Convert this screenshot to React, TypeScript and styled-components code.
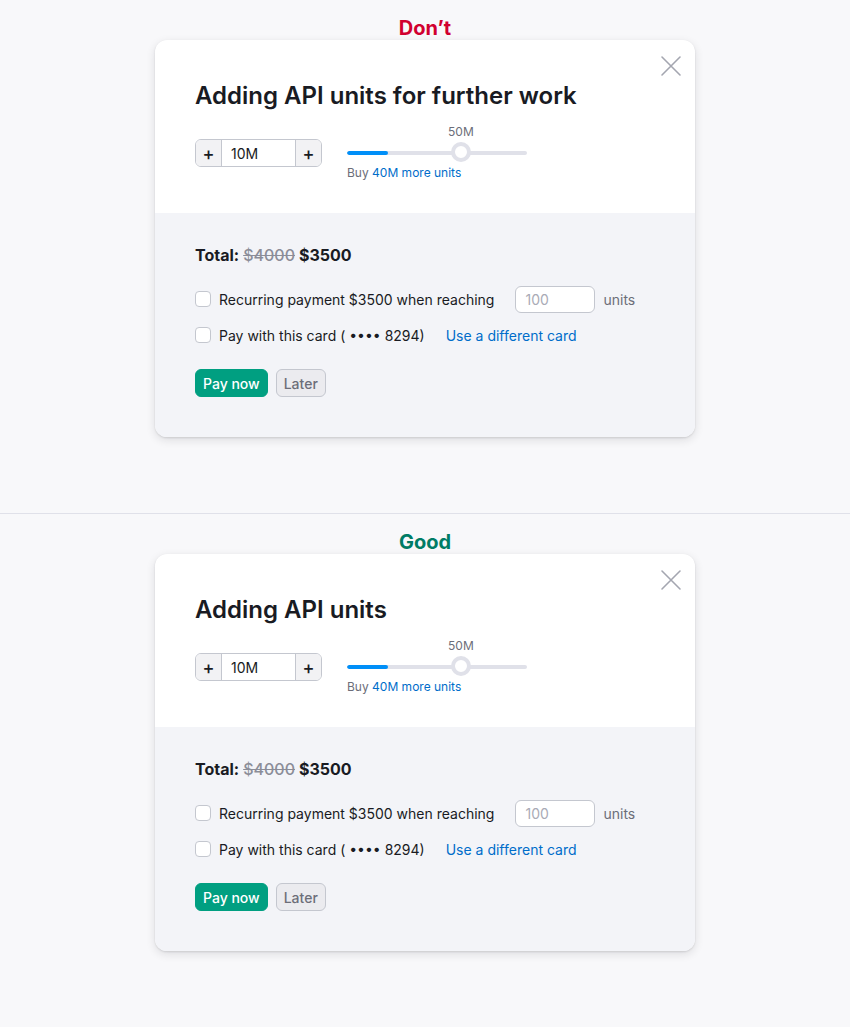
import React from "react";
import styled, { createGlobalStyle } from "styled-components";

const GlobalStyle = createGlobalStyle`
  html, body { margin: 0; padding: 0; background: #f8f8fa; }
  body { font-family: Inter, "Noto Sans", Arial, sans-serif; color: #191b23; -webkit-font-smoothing: antialiased; }
  * { box-sizing: border-box; }
`;

const Page = styled.div`
  width: 850px;
  display: flex;
  flex-direction: column;
`;

const Section = styled.section<{ $last?: boolean }>`
  display: flex;
  flex-direction: column;
  align-items: center;
  padding: 16px 0 76px;
  border-bottom: ${(p) => (p.$last ? "none" : "1px solid #e0e1e9")};
`;

const Verdict = styled.div<{ $tone: "bad" | "good" }>`
  font-size: 20px;
  line-height: 24px;
  font-weight: 700;
  color: ${(p) => (p.$tone === "bad" ? "#d1002f" : "#007c65")};
`;

const Card = styled.div`
  position: relative;
  width: 540px;
  border-radius: 12px;
  overflow: hidden;
  background: #ffffff;
  box-shadow: 0 1px 2px rgba(25, 27, 35, 0.12), 0 3px 10px rgba(25, 27, 35, 0.12);
`;

const CloseButton = styled.button`
  position: absolute;
  top: 14px;
  right: 12px;
  width: 24px;
  height: 24px;
  padding: 0;
  border: none;
  background: transparent;
  display: flex;
  align-items: center;
  justify-content: center;
  color: #a4a6b0;
  cursor: pointer;
`;

const Header = styled.div`
  padding: 42px 40px 32px;
  display: flex;
  flex-direction: column;
  gap: 14px;
`;

const Title = styled.h2`
  margin: 0;
  font-size: 24px;
  line-height: 28px;
  font-weight: 600;
  color: #191b23;
`;

const Controls = styled.div`
  display: flex;
  align-items: flex-start;
  gap: 25px;
`;

const Stepper = styled.div`
  margin-top: 15px;
  display: flex;
  width: 127px;
  height: 28px;
  border: 1px solid #c4c7cf;
  border-radius: 6px;
  overflow: hidden;
  background: #fff;
`;

const StepButton = styled.div<{ $side: "left" | "right" }>`
  width: 26px;
  flex: none;
  display: flex;
  align-items: center;
  justify-content: center;
  background: #f2f2f4;
  font-size: 18px;
  font-weight: 500;
  color: #191b23;
  ${(p) => (p.$side === "left" ? "border-right: 1px solid #c4c7cf;" : "border-left: 1px solid #c4c7cf;")}
`;

const StepValue = styled.div`
  flex: 1;
  display: flex;
  align-items: center;
  padding-left: 9px;
  font-size: 14px;
  color: #191b23;
`;

const SliderBlock = styled.div`
  width: 180px;
  display: flex;
  flex-direction: column;
`;

const SliderLabelRow = styled.div`
  position: relative;
  height: 16px;
`;

const SliderLabel = styled.span`
  position: absolute;
  top: 0;
  transform: translateX(-50%);
  font-size: 12px;
  line-height: 16px;
  color: #6c6e79;
`;

const TrackArea = styled.div`
  position: relative;
  height: 20px;
  margin-top: 3px;
  display: flex;
  align-items: center;
`;

const Track = styled.div`
  width: 100%;
  height: 4px;
  border-radius: 2px;
  background: #e0e1e9;
  overflow: hidden;
  display: flex;
`;

const TrackFill = styled.div`
  height: 100%;
  background: #008ff8;
  border-radius: 2px;
`;

const Thumb = styled.div`
  position: absolute;
  top: -1px;
  width: 20px;
  height: 20px;
  margin-left: -10px;
  border-radius: 50%;
  background: #fff;
  border: 4px solid #e0e1e9;
`;

const BuyText = styled.div`
  margin-top: 2px;
  font-size: 12px;
  line-height: 16px;
  color: #6c6e79;
`;

const Link = styled.a`
  color: #006dca;
  text-decoration: none;
`;

const Body = styled.div`
  background: #f3f4f8;
  padding: 30px 40px 40px;
  display: flex;
  flex-direction: column;
`;

const Total = styled.div`
  font-size: 16px;
  line-height: 24px;
  font-weight: 700;
  display: flex;
  gap: 4px;
`;

const OldPrice = styled.span`
  font-weight: 500;
  color: #8b8d98;
  text-decoration: line-through;
`;

const Options = styled.div`
  margin-top: 18px;
  display: flex;
  flex-direction: column;
  gap: 8px;
`;

const Row = styled.label`
  display: flex;
  align-items: center;
  height: 28px;
  font-size: 14px;
  color: #191b23;
`;

const Check = styled.span`
  width: 16px;
  height: 16px;
  flex: none;
  border: 1px solid #c4c7cf;
  border-radius: 4px;
  background: #fff;
  margin-right: 8px;
`;

const Spacer = styled.span`
  width: 21px;
  flex: none;
`;

const SmallInput = styled.div`
  width: 80px;
  height: 27px;
  border: 1px solid #c4c7cf;
  border-radius: 6px;
  background: #fff;
  display: flex;
  align-items: center;
  padding-left: 9px;
  font-size: 14px;
  color: #a9abb6;
`;

const Units = styled.span`
  margin-left: 8px;
  color: #6c6e79;
`;

const Actions = styled.div`
  margin-top: 20px;
  display: flex;
  gap: 8px;
`;

const Button = styled.button<{ $primary?: boolean }>`
  height: 28px;
  padding: 0 7px;
  border-radius: 6px;
  font-family: inherit;
  font-size: 14px;
  font-weight: 500;
  cursor: pointer;
  border: 1px solid ${(p) => (p.$primary ? "#009f81" : "#c4c7cf")};
  background: ${(p) => (p.$primary ? "#009f81" : "#ebebef")};
  color: ${(p) => (p.$primary ? "#ffffff" : "#6c6e79")};
`;

const CloseIcon = () => (
  <svg width="24" height="24" viewBox="0 0 24 24" fill="none">
    <path d="M3 3L21 21M21 3L3 21" stroke="currentColor" strokeWidth="1.6" strokeLinecap="round" />
  </svg>
);

const fillPct = 23;
const thumbPct = 63.3;

const PaymentCard: React.FC<{ title: string }> = ({ title }) => (
  <Card>
    <CloseButton aria-label="Close">
      <CloseIcon />
    </CloseButton>
    <Header>
      <Title>{title}</Title>
      <Controls>
        <Stepper>
          <StepButton $side="left">+</StepButton>
          <StepValue>10M</StepValue>
          <StepButton $side="right">+</StepButton>
        </Stepper>
        <SliderBlock>
          <SliderLabelRow>
            <SliderLabel style={{ left: `${thumbPct}%` }}>50M</SliderLabel>
          </SliderLabelRow>
          <TrackArea>
            <Track>
              <TrackFill style={{ width: `${fillPct}%` }} />
            </Track>
            <Thumb style={{ left: `${thumbPct}%` }} />
          </TrackArea>
          <BuyText>
            Buy <Link>40M more units</Link>
          </BuyText>
        </SliderBlock>
      </Controls>
    </Header>
    <Body>
      <Total>
        <span>Total:</span>
        <OldPrice>$4000</OldPrice>
        <span>$3500</span>
      </Total>
      <Options>
        <Row>
          <Check />
          <span>Recurring payment $3500 when reaching</span>
          <Spacer />
          <SmallInput>100</SmallInput>
          <Units>units</Units>
        </Row>
        <Row>
          <Check />
          <span>Pay with this card ( •••• 8294)</span>
          <Spacer />
          <Link>Use a different card</Link>
        </Row>
      </Options>
      <Actions>
        <Button $primary>Pay now</Button>
        <Button>Later</Button>
      </Actions>
    </Body>
  </Card>
);

export default function App() {
  return (
    <>
      <GlobalStyle />
      <Page>
        <Section>
          <Verdict $tone="bad">Don’t</Verdict>
          <PaymentCard title="Adding API units for further work" />
        </Section>
        <Section $last>
          <Verdict $tone="good">Good</Verdict>
          <PaymentCard title="Adding API units" />
        </Section>
      </Page>
    </>
  );
}
